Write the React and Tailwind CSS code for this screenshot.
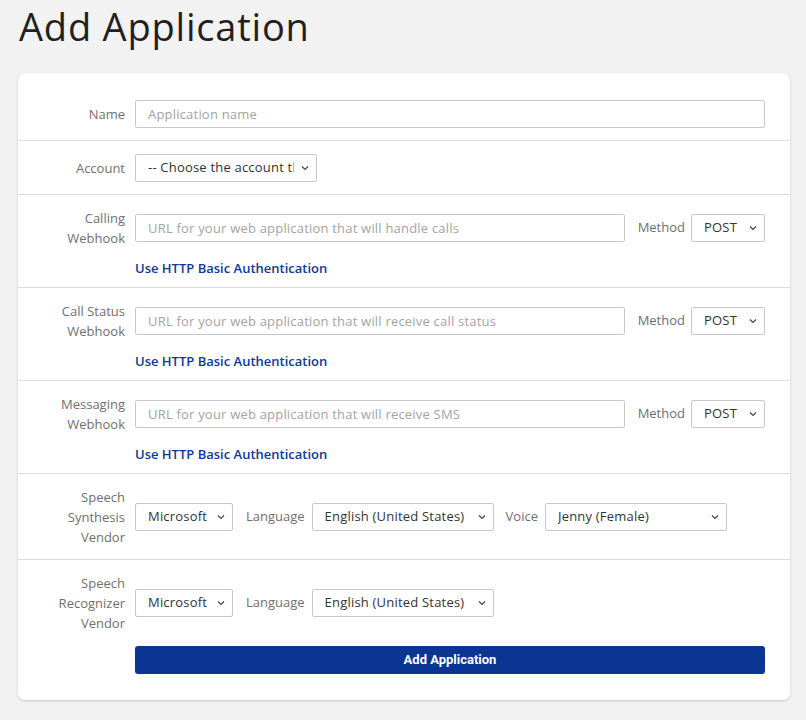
const font = { fontFamily: '"Open Sans", "Liberation Sans", sans-serif' };

const Chevron = () => (
  <svg
    className="pointer-events-none absolute right-[8px] top-1/2 -translate-y-1/2"
    width="8"
    height="5"
    viewBox="0 0 8 5"
    fill="none"
  >
    <path d="M1 1l3 3 3-3" stroke="#444" strokeWidth="1.2" />
  </svg>
);

const Select = ({ value, width }) => (
  <div className={`relative shrink-0 ${width}`}>
    <select
      defaultValue={value}
      className="h-[28px] w-full appearance-none overflow-hidden rounded-[2px] border border-[#c8c8c8] bg-white pl-[12px] pr-[22px] text-[13px] tracking-[0.2px] text-[#333] outline-none"
    >
      <option>{value}</option>
    </select>
    <Chevron />
  </div>
);

const Input = ({ placeholder }) => (
  <input
    placeholder={placeholder}
    className="h-[28px] min-w-0 flex-1 rounded-[2px] border border-[#c8c8c8] bg-white px-[12px] text-[13px] tracking-[0.2px] text-[#333] outline-none placeholder:text-[#a3a3a3]"
  />
);

const Label = ({ lines }) => (
  <div className="w-[117px] shrink-0 pr-[10px] text-right text-[13px] leading-[20px] text-[#707070]">
    {lines.map((l) => (
      <div key={l}>{l}</div>
    ))}
  </div>
);

const Row = ({ children, last }) => (
  <div className={`pt-[13px] pb-[12px] ${last ? '' : 'border-b border-[#dcdcdc]'}`}>{children}</div>
);

const Webhook = ({ lines, placeholder }) => (
  <Row>
    <div className="flex items-center pr-[25px]">
      <Label lines={lines} />
      <Input placeholder={placeholder} />
      <span className="ml-[13px] mr-[6px] text-[13px] text-[#707070]">Method</span>
      <Select value="POST" width="w-[74px]" />
    </div>
    <div className="mt-[14px] pl-[117px] text-[13px] font-semibold leading-[13px] text-[#0d3a94]">
      Use HTTP Basic Authentication
    </div>
  </Row>
);

export default function App() {
  return (
    <div className="min-h-[720px] bg-[#f2f2f2] px-[18px] pb-[20px]" style={font}>
      <h1 className="pl-[1px] text-[38px] font-normal leading-[52px] tracking-[0.8px] text-[#231f20]">
        Add Application
      </h1>
      <div className="mt-[21px] w-[772px] rounded-[7px] bg-white pt-[14px] pb-[14px] shadow-[0_1px_3px_rgba(0,0,0,0.18)]">
        <Row>
          <div className="flex items-center pr-[25px]">
            <Label lines={['Name']} />
            <Input placeholder="Application name" />
          </div>
        </Row>
        <Row>
          <div className="flex items-center">
            <Label lines={['Account']} />
            <Select
              value="-- Choose the account this application will be associated with --"
              width="w-[182px]"
            />
          </div>
        </Row>
        <Webhook
          lines={['Calling', 'Webhook']}
          placeholder="URL for your web application that will handle calls"
        />
        <Webhook
          lines={['Call Status', 'Webhook']}
          placeholder="URL for your web application that will receive call status"
        />
        <Webhook
          lines={['Messaging', 'Webhook']}
          placeholder="URL for your web application that will receive SMS"
        />
        <Row>
          <div className="flex items-center">
            <Label lines={['Speech', 'Synthesis', 'Vendor']} />
            <Select value="Microsoft" width="w-[98px]" />
            <span className="ml-[13px] mr-[7px] text-[13px] text-[#707070]">Language</span>
            <Select value="English (United States)" width="w-[182px]" />
            <span className="ml-[12px] mr-[7px] text-[13px] text-[#707070]">Voice</span>
            <Select value="Jenny (Female)" width="w-[182px]" />
          </div>
        </Row>
        <Row last>
          <div className="flex items-center">
            <Label lines={['Speech', 'Recognizer', 'Vendor']} />
            <Select value="Microsoft" width="w-[98px]" />
            <span className="ml-[13px] mr-[7px] text-[13px] text-[#707070]">Language</span>
            <Select value="English (United States)" width="w-[182px]" />
          </div>
          <div className="mt-[13px] pl-[117px] pr-[25px]">
            <button
              className="h-[28px] w-full rounded-[3px] bg-[#0b3592] text-[13px] font-bold text-white"
              style={{ fontFamily: 'Roboto, "Liberation Sans", sans-serif' }}
            >
              Add Application
            </button>
          </div>
        </Row>
      </div>
    </div>
  );
}
